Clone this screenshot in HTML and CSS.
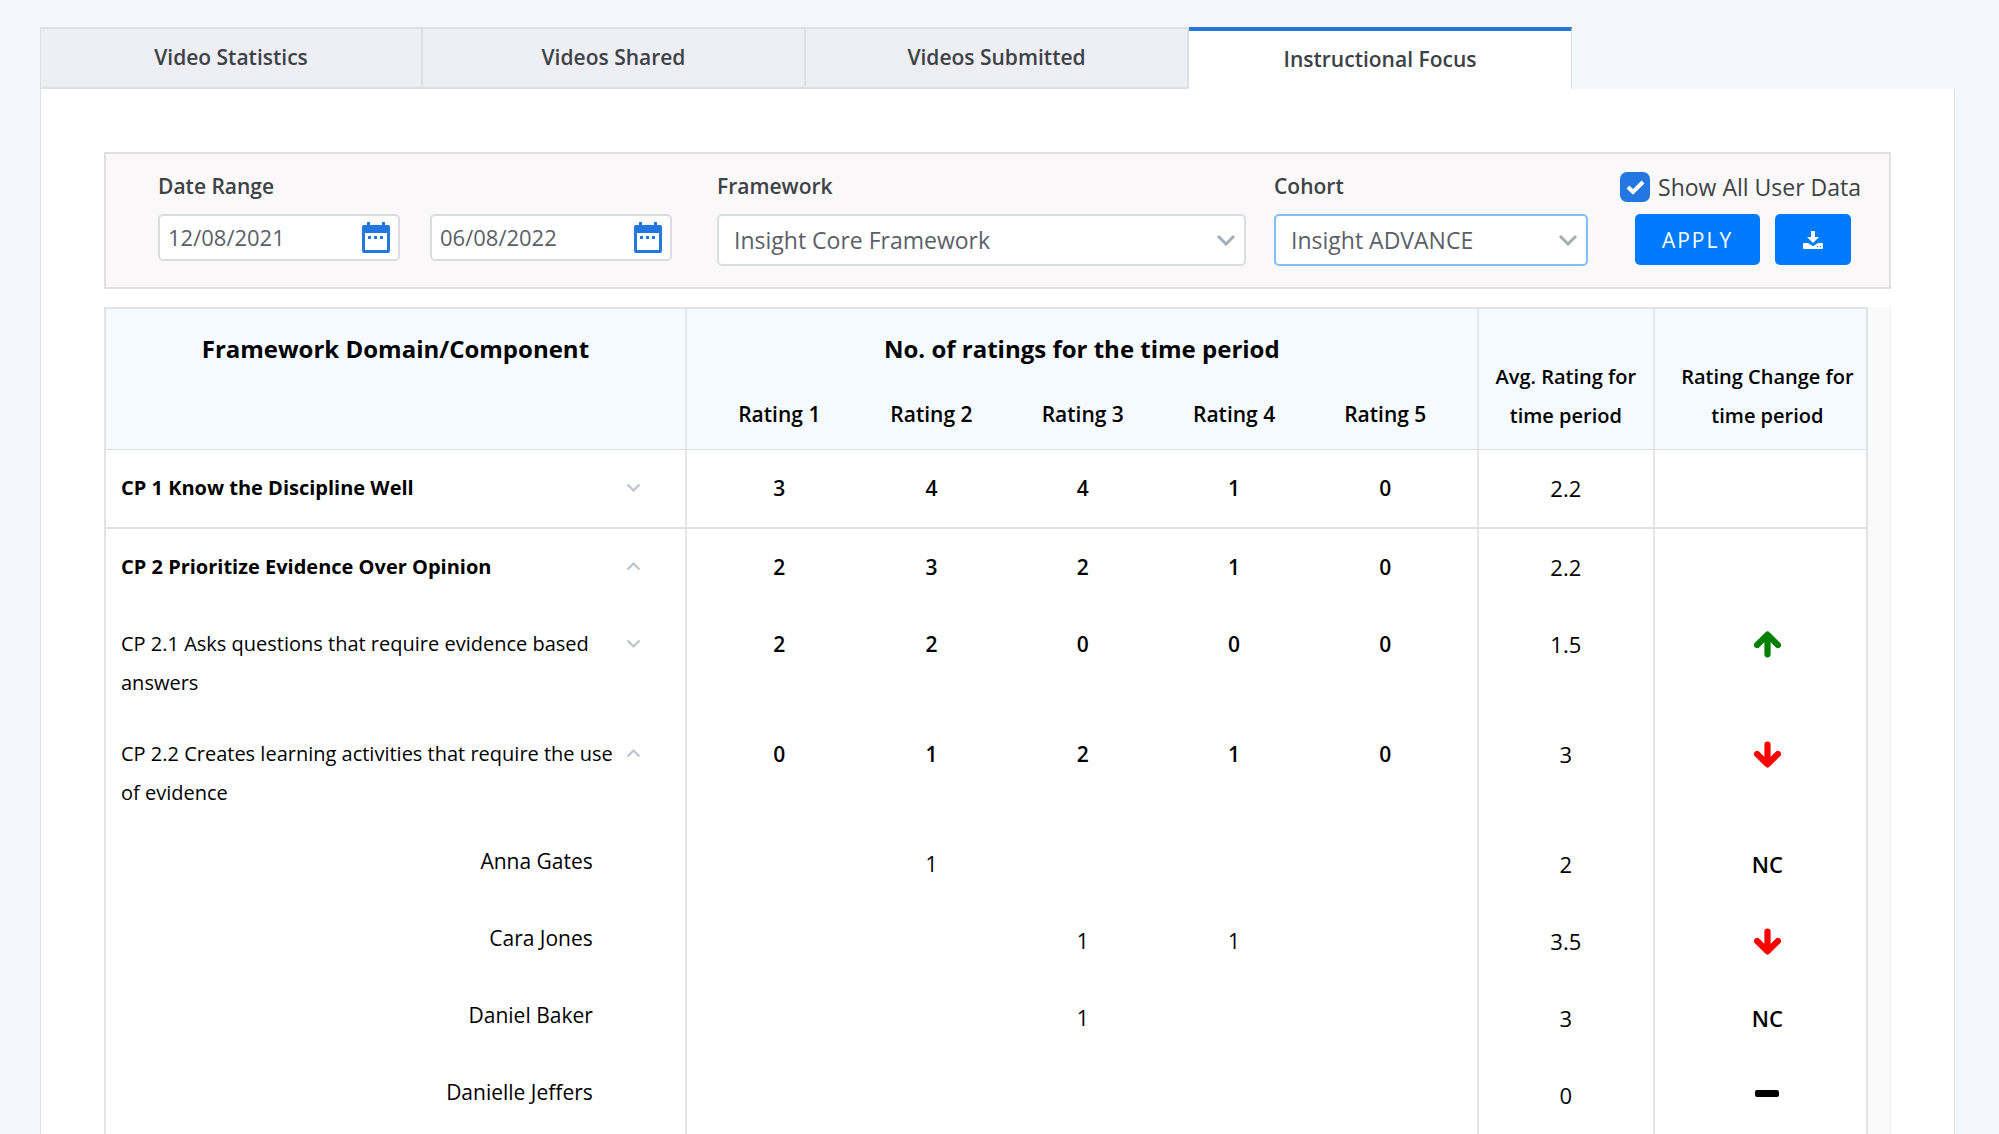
FILE: index.html
```
<!DOCTYPE html>
<html lang="en">
<head>
<meta charset="UTF-8">
<meta name="viewport" content="width=device-width, initial-scale=1.0">
<title>Instructional Focus</title>
<link rel="stylesheet" href="styles.css">
</head>
<body>

<svg class="symbols" aria-hidden="true">
    <symbol id="calendar" viewBox="0 0 28 31">
        <path fill-rule="evenodd" d="M5 0h3v3h12V0h3v3h3a2 2 0 0 1 2 2v24a2 2 0 0 1-2 2H2a2 2 0 0 1-2-2V5a2 2 0 0 1 2-2h3zM3 11v17h22V11zM6 14h3v3H6zM12 14h3v3h-3zM18 14h3v3h-3z"/>
    </symbol>
    <symbol id="down" viewBox="0 0 20 12">
        <path fill="none" stroke="currentColor" d="M2 2l8 8 8-8"/>
    </symbol>
    <symbol id="up" viewBox="0 0 20 12">
        <path fill="none" stroke="currentColor" d="M2 10l8-8 8 8"/>
    </symbol>
    <symbol id="arrow-up" viewBox="0 0 26 25">
        <path fill="none" stroke="currentColor" stroke-width="6" stroke-linecap="round" stroke-linejoin="round" d="M13 22V5M3 13L13 3l10 10"/>
    </symbol>
    <symbol id="arrow-down" viewBox="0 0 26 25">
        <path fill="none" stroke="currentColor" stroke-width="6" stroke-linecap="round" stroke-linejoin="round" d="M13 3v17M3 12l10 10 10-10"/>
    </symbol>
</svg>

<div class="page">
    <div class="tabs">
        <a href="#">Video Statistics</a>
        <a href="#">Videos Shared</a>
        <a href="#">Videos Submitted</a>
        <a href="#" class="active">Instructional Focus</a>
    </div>

    <div class="panel">
        <form class="filters">
            <div class="field dates">
                <label for="startDate">Date Range</label>
                <div class="date-row">
                    <div class="date-box">
                        <input type="text" id="startDate" value="12/08/2021">
                        <svg class="calendar"><use href="#calendar"/></svg>
                    </div>
                    <div class="date-box">
                        <input type="text" id="endDate" aria-label="End date" value="06/08/2022">
                        <svg class="calendar"><use href="#calendar"/></svg>
                    </div>
                </div>
            </div>
            <div class="field framework">
                <label for="framework">Framework</label>
                <div class="select-box">
                    <select id="framework"><option>Insight Core Framework</option></select>
                    <svg class="caret"><use href="#down"/></svg>
                </div>
            </div>
            <div class="field cohort">
                <label for="cohort">Cohort</label>
                <div class="select-box focused">
                    <select id="cohort"><option>Insight ADVANCE</option></select>
                    <svg class="caret"><use href="#down"/></svg>
                </div>
            </div>
            <div class="actions">
                <label class="show-all"><input type="checkbox" checked> Show All User Data</label>
                <div class="buttons">
                    <button type="button" class="apply">APPLY</button>
                    <button type="button" class="download" aria-label="Download">
                        <svg viewBox="0 0 20 18"><path fill="#fff" fill-rule="evenodd" d="M8 0h4v6h4l-6 6-6-6h4zM1 12h4l3 2q2 2 4 0l3-2h4a1 1 0 0 1 1 1v4a1 1 0 0 1-1 1H1a1 1 0 0 1-1-1v-4a1 1 0 0 1 1-1zM14 15v1h1v-1zM17 15v1h1v-1z"/></svg>
                    </button>
                </div>
            </div>
        </form>

        <div class="table-wrap">
            <table>
                <colgroup>
                    <col class="col-name">
                    <col class="col-edge"><col><col><col><col class="col-edge">
                    <col class="col-avg">
                    <col class="col-change">
                </colgroup>
                <thead>
                    <tr>
                        <th rowspan="2" class="title">Framework Domain/Component</th>
                        <th colspan="5" class="title">No. of ratings for the time period</th>
                        <th rowspan="2" class="side">Avg. Rating for<br>time period</th>
                        <th rowspan="2" class="side change">Rating Change for<br>time period</th>
                    </tr>
                    <tr class="ratings">
                        <th>Rating 1</th><th>Rating 2</th><th>Rating 3</th><th>Rating 4</th><th>Rating 5</th>
                    </tr>
                </thead>
                <tbody>
                    <tr class="domain">
                        <td><div class="name"><span>CP 1 Know the Discipline Well</span><svg class="toggle"><use href="#down"/></svg></div></td>
                        <td>3</td><td>4</td><td>4</td><td>1</td><td>0</td><td>2.2</td><td></td>
                    </tr>
                    <tr class="domain">
                        <td><div class="name"><span>CP 2 Prioritize Evidence Over Opinion</span><svg class="toggle"><use href="#up"/></svg></div></td>
                        <td>2</td><td>3</td><td>2</td><td>1</td><td>0</td><td>2.2</td><td></td>
                    </tr>
                    <tr class="component">
                        <td><div class="name"><span>CP 2.1 Asks questions that require evidence based answers</span><svg class="toggle"><use href="#down"/></svg></div></td>
                        <td>2</td><td>2</td><td>0</td><td>0</td><td>0</td><td>1.5</td>
                        <td><svg class="arrow good"><use href="#arrow-up"/></svg></td>
                    </tr>
                    <tr class="component">
                        <td><div class="name"><span>CP 2.2 Creates learning activities that require the use of evidence</span><svg class="toggle"><use href="#up"/></svg></div></td>
                        <td>0</td><td>1</td><td>2</td><td>1</td><td>0</td><td>3</td>
                        <td><svg class="arrow bad"><use href="#arrow-down"/></svg></td>
                    </tr>
                    <tr class="user">
                        <td>Anna Gates</td>
                        <td></td><td>1</td><td></td><td></td><td></td><td>2</td><td>NC</td>
                    </tr>
                    <tr class="user">
                        <td>Cara Jones</td>
                        <td></td><td></td><td>1</td><td>1</td><td></td><td>3.5</td>
                        <td><svg class="arrow bad"><use href="#arrow-down"/></svg></td>
                    </tr>
                    <tr class="user">
                        <td>Daniel Baker</td>
                        <td></td><td></td><td>1</td><td></td><td></td><td>3</td><td>NC</td>
                    </tr>
                    <tr class="user">
                        <td>Danielle Jeffers</td>
                        <td></td><td></td><td></td><td></td><td></td><td>0</td>
                        <td><span class="dash"></span></td>
                    </tr>
                </tbody>
            </table>
        </div>
    </div>
</div>

</body>
</html>
```
FILE: styles.css
```
* {
    box-sizing: border-box;
}

html,
body {
    height: 100%;
}

body {
    margin: 0;
    background: #f4f8fc;
    color: #3d4246;
    font-family: "Open Sans", sans-serif;
    font-size: 21px;
    overflow: hidden;
}

.symbols {
    display: none;
}

.page {
    min-height: 100%;
    padding: 27px 44px 0 40px;
    display: flex;
    flex-direction: column;
}

/* Tabs */
.tabs {
    display: grid;
    grid-template-columns: repeat(4, 20%);
    height: 62px;
}

.tabs a {
    display: flex;
    justify-content: center;
    align-items: center;
    padding-bottom: 2px;
    background: #eeeff4;
    border: 1px solid #dedfe1;
    border-width: 2px 2px 2px 0;
    color: #3d4246;
    font-weight: 600;
    text-decoration: none;
}

.tabs a:first-child {
    border-left-width: 1px;
}

.tabs a.active {
    background: #fff;
    border-top: 4px solid #2377df;
    border-bottom: 0;
    border-right-width: 1px;
}

.panel {
    flex: 1;
    background: #fff;
    border: 1px solid #dcdfe3;
    border-width: 0 1px;
    padding: 63px 63px 0;
}

/* Filters */
.filters {
    display: flex;
    height: 137px;
    padding: 18px 28px 0 52px;
    background: #faf8f9;
    border: 2px solid #e1e1e3;
}

.field label {
    display: block;
    height: 42px;
    line-height: 28px;
    font-weight: 600;
}

.dates {
    margin-right: 45px;
}

.date-row {
    display: flex;
    gap: 30px;
}

.date-box,
.select-box {
    position: relative;
}

.date-box input,
.select-box select {
    appearance: none;
    width: 100%;
    background: #fff;
    border: 2px solid #d9dde2;
    border-radius: 5px;
    color: #5a6068;
    font: inherit;
}

.date-box {
    width: 242px;
}

.date-box input {
    height: 47px;
    padding: 0 8px 2px;
    font-size: 22px;
}

.calendar {
    position: absolute;
    top: 8px;
    right: 10px;
    width: 28px;
    height: 31px;
    fill: #2377df;
}

.framework {
    flex: 1;
    margin-right: 28px;
}

.cohort {
    width: 314px;
    margin-right: 32px;
}

.select-box select {
    height: 52px;
    padding: 0 15px;
    font-size: 23px;
}

.select-box.focused select {
    border-color: #80bdff;
}

.caret {
    position: absolute;
    top: 20px;
    right: 10px;
    width: 20px;
    height: 12px;
    color: #a3afb7;
    stroke-width: 3;
}

.show-all {
    display: flex;
    align-items: center;
    gap: 8px;
    height: 30px;
    margin-bottom: 12px;
    font-size: 23px;
}

.show-all input {
    appearance: none;
    width: 30px;
    height: 30px;
    margin: 0;
    border-radius: 7px;
    background: #2377df url("data:image/svg+xml,%3Csvg xmlns='http://www.w3.org/2000/svg' viewBox='0 0 30 30'%3E%3Cpath d='M8 15l5 5 10-10' fill='none' stroke='white' stroke-width='4'/%3E%3C/svg%3E");
}

.buttons {
    display: flex;
    gap: 15px;
    padding-left: 15px;
}

.buttons button {
    height: 51px;
    border: 0;
    border-radius: 5px;
    background: #007bff;
    color: #fff;
    font: inherit;
}

.buttons .apply {
    width: 125px;
    letter-spacing: 2px;
}

.buttons .download {
    width: 76px;
    padding: 0;
}

.download svg {
    display: block;
    width: 20px;
    height: 18px;
    margin: 0 auto;
}

/* Ratings table */
.table-wrap {
    margin-top: 18px;
    padding-right: 22px;
    background: #fafafa;
    border-right: 1px solid #f0f0f0;
}

table {
    width: 100%;
    table-layout: fixed;
    border-collapse: separate;
    border-spacing: 0;
    background: #fff;
    border: 2px solid #e1e3e5;
    border-bottom: 0;
    color: #000;
}

.col-name {
    width: 33%;
}

.col-edge {
    width: 169px;
}

.col-avg {
    width: 10%;
}

.col-change {
    width: 12%;
}

th,
td {
    padding: 0;
    text-align: center;
}

thead th {
    background: #f5faff;
    vertical-align: top;
    font-weight: 600;
}

thead .title {
    height: 84px;
    padding-top: 22px;
    font-size: 24px;
    font-weight: 700;
    line-height: 36px;
}

thead .ratings th {
    height: 57px;
    line-height: 42px;
}

thead .side {
    padding-top: 48px;
    font-size: 20px;
    line-height: 39px;
}

thead .change {
    padding-left: 14px;
}

thead tr:first-child th[rowspan],
thead .ratings th {
    border-bottom: 1px solid #d9dde1;
}

th.title,
th.side:not(.change),
.ratings th:last-child,
td:first-child,
td:nth-child(6),
td:nth-child(7) {
    border-right: 2px solid #e5e6e8;
}

td {
    height: 77px;
    padding-top: 19px;
    vertical-align: top;
    line-height: 39px;
    font-weight: 600;
}

/* the outer rating columns are wider so the five stay evenly spaced */
.ratings th:first-child,
td:nth-child(2) {
    padding-left: 16px;
}

.ratings th:last-child,
td:nth-child(6) {
    padding-right: 16px;
}

td:nth-child(7) {
    font-size: 22px;
    font-weight: 400;
}

td:last-child {
    padding-left: 14px;
    font-size: 22px;
}

.domain td:first-child,
.component td:first-child {
    padding: 18px 44px 14px 15px;
    text-align: left;
    font-size: 20px;
}

.domain td:first-child {
    font-weight: 700;
}

.domain:first-child td {
    height: 79px;
    border-bottom: 2px solid #e1e1e1;
}

.component td:first-child,
.user td {
    font-weight: 400;
}

.name {
    display: flex;
    justify-content: space-between;
}

.user td:first-child {
    padding: 16px 92px 0 0;
    text-align: right;
}

.user td:last-child {
    font-weight: 600;
}

.toggle {
    flex: none;
    width: 15px;
    height: 39px;
    margin-left: 12px;
    color: #bcc5cb;
    stroke-width: 3;
}

.arrow {
    display: block;
    width: 27px;
    height: 39px;
    margin: 0 auto;
}

.good {
    color: #008000;
}

.bad {
    color: #f00;
}

.dash {
    display: block;
    width: 24px;
    height: 7px;
    margin: 14px auto;
    border-radius: 2px;
    background: #000;
}
```
